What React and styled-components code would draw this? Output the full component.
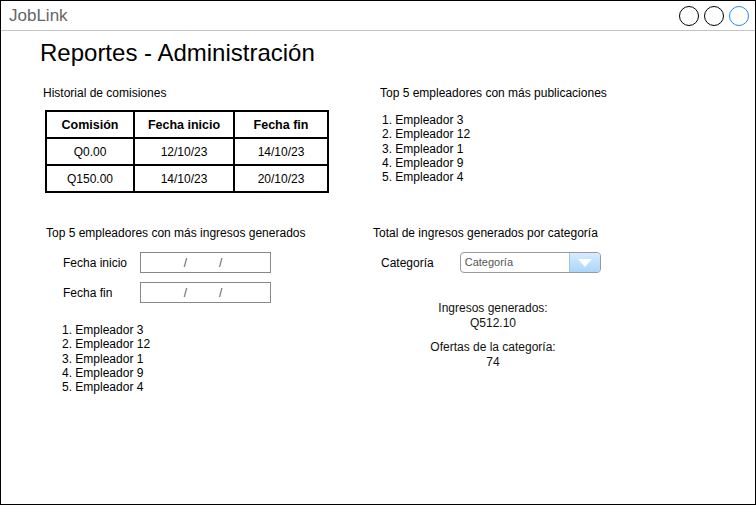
import React from 'react';
import styled, { createGlobalStyle } from 'styled-components';

const GlobalStyle = createGlobalStyle`
  body {
    margin: 0;
    background: #fff;
    font-family: "Liberation Sans", Arial, sans-serif;
  }
`;

// Ventana principal
const Window = styled.div`
  width: 756px;
  height: 505px;
  box-sizing: border-box;
  border: 1px solid #000;
  background: #fff;
  display: flex;
  flex-direction: column;
`;

const TopBar = styled.div`
  height: 29px;
  border-bottom: 1px solid #c4c4c4;
  display: flex;
  align-items: center;
  justify-content: space-between;
  padding: 0 6px 0 8px;
`;

const Brand = styled.span`
  font-size: 17px;
  color: #666;
`;

const Circles = styled.div`
  display: flex;
  gap: 5px;
  padding-top: 1px;
`;

const Circle = styled.span`
  width: 18px;
  height: 18px;
  border-radius: 50%;
  border: 1px solid ${(p) => (p.$active ? '#1f8cf5' : '#000')};
`;

const Title = styled.h1`
  margin: 8px 0 0 39px;
  font-size: 24px;
  font-weight: normal;
  color: #000;
  line-height: 28px;
`;

const Grid = styled.div`
  display: grid;
  grid-template-columns: 340px 1fr;
  grid-template-rows: 140px 1fr;
`;

const Section = styled.section`
  padding-left: ${(p) => p.$left}px;
  padding-top: ${(p) => p.$top}px;
  font-size: 12px;
  color: #000;
`;

const Label = styled.div`
  font-size: 12px;
  line-height: 14px;
`;

const Table = styled.table`
  border-collapse: collapse;
  margin: 10px 0 0 2px;
  font-size: 12px;
  td, th {
    border: 2px solid #000;
    height: 25px;
    text-align: center;
    padding: 0;
  }
  th {
    font-weight: bold;
    font-size: 12.5px;
  }
`;

const List = styled.ol`
  margin: ${(p) => p.$top}px 0 0 ${(p) => p.$left}px;
  padding: 0;
  list-style: none;
  li {
    line-height: 14.3px;
    font-size: 12px;
  }
`;

const FieldRow = styled.div`
  display: flex;
  align-items: center;
  margin: ${(p) => p.$top}px 0 0 ${(p) => p.$left}px;
`;

const FieldLabel = styled.span`
  width: 77px;
  font-size: 12px;
`;

const DateBox = styled.div`
  width: 124px;
  height: 19px;
  border: 1px solid #888;
  display: flex;
  align-items: center;
  justify-content: center;
  gap: 32px;
  color: #555;
  font-size: 12px;
  padding-right: 5px;
  box-sizing: content-box;
`;

const Select = styled.div`
  width: 139px;
  height: 19px;
  border: 1px solid #999;
  border-radius: 4px;
  display: flex;
  overflow: hidden;
  margin-left: 26px;
`;

const SelectText = styled.span`
  flex: 1;
  padding-left: 4px;
  color: #555;
  font-size: 11px;
  line-height: 19px;
`;

const SelectButton = styled.span`
  width: 30px;
  border-left: 1px solid #9cc;
  background: linear-gradient(#d6ecff, #a9d6fb);
  display: flex;
  align-items: center;
  justify-content: center;
`;

const Stat = styled.div`
  text-align: center;
  width: 240px;
  margin-top: ${(p) => p.$top}px;
  line-height: 15px;
  color: #111;
`;

const empleadores = ['Empleador 3', 'Empleador 12', 'Empleador 1', 'Empleador 9', 'Empleador 4'];

const comisiones = [
  { monto: 'Q0.00', inicio: '12/10/23', fin: '14/10/23' },
  { monto: 'Q150.00', inicio: '14/10/23', fin: '20/10/23' },
];

const App = () => {
  return (
    <>
      <GlobalStyle />
      <Window>
        <TopBar>
          <Brand>JobLink</Brand>
          <Circles>
            <Circle />
            <Circle />
            <Circle $active />
          </Circles>
        </TopBar>
        <Title>Reportes - Administración</Title>
        <Grid>
          <Section $left={42} $top={19}>
            <Label>Historial de comisiones</Label>
            <Table>
              <thead>
                <tr>
                  <th style={{ width: 86 }}>Comisión</th>
                  <th style={{ width: 98 }}>Fecha inicio</th>
                  <th style={{ width: 92 }}>Fecha fin</th>
                </tr>
              </thead>
              <tbody>
                {comisiones.map((c) => (
                  <tr key={c.monto}>
                    <td>{c.monto}</td>
                    <td>{c.inicio}</td>
                    <td>{c.fin}</td>
                  </tr>
                ))}
              </tbody>
            </Table>
          </Section>
          <Section $left={39} $top={19}>
            <Label>Top 5 empleadores con más publicaciones</Label>
            <List $top={13} $left={2}>
              {empleadores.map((e, i) => (
                <li key={e}>{i + 1}. {e}</li>
              ))}
            </List>
          </Section>
          <Section $left={45} $top={19}>
            <Label>Top 5 empleadores con más ingresos generados</Label>
            <FieldRow $top={12} $left={17}>
              <FieldLabel>Fecha inicio</FieldLabel>
              <DateBox><span>/</span><span>/</span></DateBox>
            </FieldRow>
            <FieldRow $top={9} $left={17}>
              <FieldLabel>Fecha fin</FieldLabel>
              <DateBox><span>/</span><span>/</span></DateBox>
            </FieldRow>
            <List $top={20} $left={16}>
              {empleadores.map((e, i) => (
                <li key={e}>{i + 1}. {e}</li>
              ))}
            </List>
          </Section>
          <Section $left={32} $top={19}>
            <Label>Total de ingresos generados por categoría</Label>
            <FieldRow $top={12} $left={8}>
              <span>Categoría</span>
              <Select>
                <SelectText>Categoría</SelectText>
                <SelectButton>
                  <svg width="16" height="10" viewBox="0 0 16 10">
                    <polygon points="1,1 15,1 8,9" fill="#fff" />
                  </svg>
                </SelectButton>
              </Select>
            </FieldRow>
            <Stat $top={28}>
              Ingresos generados:<br />Q512.10
            </Stat>
            <Stat $top={9}>
              Ofertas de la categoría:<br />74
            </Stat>
          </Section>
        </Grid>
      </Window>
    </>
  );
};

export default App;
